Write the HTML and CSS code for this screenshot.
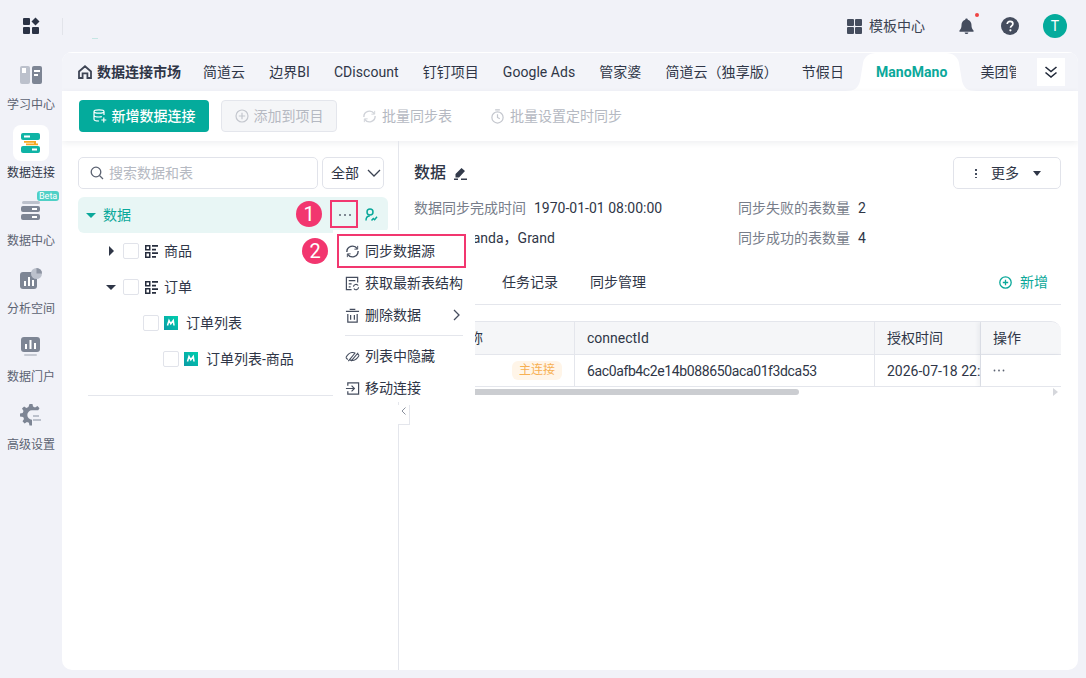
FILE: index.html
```html
<!DOCTYPE html>
<html lang="zh-CN">
<head>
    <meta charset="UTF-8">
    <title>数据连接</title>
    <link rel="stylesheet" href="styles.css">
</head>
<body>
    <svg class="svg-defs" width="0" height="0">
        <defs>
            <linearGradient id="mano-fill" x1="0" y1="1" x2="1" y2="0">
                <stop offset="0" stop-color="#0a9aa6"/>
                <stop offset="1" stop-color="#00d0ad"/>
            </linearGradient>
        </defs>
    </svg>

    <div class="logo-cell">
        <svg width="18" height="18" viewBox="0 0 18 18"><rect x="1" y="1" width="7" height="7" rx="1" fill="#2b3345"/><rect x="1" y="10" width="7" height="7" rx="1" fill="#2b3345"/><rect x="10" y="10" width="7" height="7" rx="1" fill="#2b3345"/><path d="M13.500 0.500l4 4-4 4-4-4z" fill="#2b3345"/></svg>
    </div>

    <header class="topbar">
        <span class="top-divider"></span>
        <span class="top-mark"></span>
        <div class="top-right">
            <svg class="tpl-icon" width="15" height="15" viewBox="0 0 15 15"><rect width="7" height="7" rx="1" fill="#454d5e"/><rect x="8" width="7" height="7" rx="1" fill="#454d5e"/><rect y="8" width="7" height="7" rx="1" fill="#454d5e"/><rect x="8" y="8" width="7" height="7" rx="1" fill="#454d5e"/></svg>
            <span class="tpl-text">模板中心</span>
            <span class="bell">
                <svg width="15" height="18" viewBox="0 0 16 18"><path d="M8 1c.8 0 1.300.5 1.400 1.200C11.900 3 13.300 5 13.300 7.700c0 3 .5 4.300 2.200 6V15H.5v-1.300c1.700-1.700 2.200-3 2.200-6C2.700 5 4.100 3 6.600 2.200 6.700 1.500 7.200 1 8 1zM6 15.800h4C9.800 17 9 17.600 8 17.600S6.200 17 6 15.800z" fill="#454d5e"/></svg>
                <i class="bell-dot"></i>
            </span>
            <svg class="help" width="18" height="18" viewBox="0 0 18 18"><circle cx="9" cy="9" r="9" fill="#454d5e"/><path d="M6.200 7c0-1.700 1.200-2.700 2.900-2.700 1.600 0 2.800.9 2.800 2.400 0 2.100-2.400 2.100-2.400 4" fill="none" stroke="#fff" stroke-width="1.700"/><circle cx="9.400" cy="13.300" r="1.100" fill="#fff"/></svg>
            <span class="avatar">T</span>
        </div>
    </header>

    <nav class="sidebar">
        <a class="side-item">
            <span class="side-icon">
                <svg width="22" height="20" viewBox="0 0 22 20"><rect x="0" y="1" width="10" height="18" rx="2" fill="#bcc1cc"/><rect x="12" y="1" width="10" height="18" rx="2" fill="#7d8594"/><rect x="2" y="3" width="4" height="5" fill="#fff"/><rect x="14" y="5" width="6" height="2" fill="#fff"/><rect x="14" y="9" width="4" height="2" fill="#fff"/></svg>
            </span>
            <span>学习中心</span>
        </a>
        <a class="side-item is-active">
            <span class="side-icon">
                <svg width="20" height="20" viewBox="0 0 20 20"><rect x="0" y="0" width="19" height="7" rx="2" fill="#0fb3a5"/><rect x="0" y="13" width="19" height="7" rx="2" fill="#0fb3a5"/><path d="M3 8h12v1.800H3z M5 10.500h12v1.800H5z M13 9h2v2.500h-2z" fill="#f7a823"/><rect x="3" y="2.500" width="6" height="2" fill="#fff"/><rect x="11" y="15.500" width="5" height="2" fill="#fff"/></svg>
            </span>
            <span>数据连接</span>
        </a>
        <a class="side-item">
            <span class="side-icon">
                <svg width="20" height="20" viewBox="0 0 20 20"><rect x="1" y="0" width="18" height="3" rx="1.500" fill="#bcc1cc"/><rect y="5" width="19" height="6" rx="2" fill="#7d8594"/><rect y="13" width="19" height="6" rx="2" fill="#7d8594"/><rect x="11" y="7" width="5" height="2" fill="#fff"/><rect x="11" y="15" width="5" height="2" fill="#fff"/></svg>
                <b class="beta">Beta</b>
            </span>
            <span>数据中心</span>
        </a>
        <a class="side-item">
            <span class="side-icon">
                <svg width="22" height="22" viewBox="0 0 22 22"><rect x="0" y="4" width="17" height="17" rx="3" fill="#7d8594"/><rect x="4" y="13" width="2" height="5" fill="#fff"/><rect x="8" y="9" width="2" height="9" fill="#fff"/><rect x="12" y="12" width="2" height="6" fill="#fff"/><circle cx="16.500" cy="5.500" r="5.500" fill="#bcc1cc"/><path d="M16.500 5.500V0a5.500 5.500 0 0 1 5.500 5.500z" fill="#8d94a2"/></svg>
            </span>
            <span>分析空间</span>
        </a>
        <a class="side-item">
            <span class="side-icon">
                <svg width="20" height="20" viewBox="0 0 20 20"><rect x="0" y="0" width="19" height="15" rx="3" fill="#7d8594"/><rect x="4" y="7" width="2" height="5" fill="#fff"/><rect x="8.500" y="3" width="2" height="9" fill="#fff"/><rect x="13" y="6" width="2" height="6" fill="#fff"/><rect x="3" y="17" width="13" height="2" rx="1" fill="#c6cad3"/></svg>
            </span>
            <span>数据门户</span>
        </a>
        <a class="side-item">
            <span class="side-icon">
                <svg width="22" height="22" viewBox="0 0 22 22"><path d="M9.500 0h3l.5 2.600 2 .8L17.500 2l2 2.300-1.300 2H12a4.700 4.700 0 1 0 0 9.400v5.800H9.500l-.6-2.700-2-.8-2.300 1.500-2.100-2.200 1.500-2.300-.8-2L0 12.500v-3l2.700-.6.800-2L2 4.600l2.100-2.200 2.300 1.500 2-.8z" fill="#7d8594"/><rect x="13" y="11" width="6" height="2" fill="#bcc1cc"/><rect x="13" y="15" width="8" height="2" fill="#bcc1cc"/></svg>
            </span>
            <span>高级设置</span>
        </a>
    </nav>

    <main class="panel">
        <div class="tabbar">
            <div class="tab-list">
                <span class="tab tab-home">
                    <svg width="14" height="14" viewBox="0 0 14 14"><path d="M1 6.500L7 1.300l6 5.200V13H9.400V8.300H4.600V13H1z" fill="none" stroke="#3e4555" stroke-width="1.800"/></svg>
                    数据连接市场
                </span>
                <span class="tab">简道云</span>
                <span class="tab">边界BI</span>
                <span class="tab">CDiscount</span>
                <span class="tab">钉钉项目</span>
                <span class="tab">Google Ads</span>
                <span class="tab">管家婆</span>
                <span class="tab">简道云（独享版）</span>
                <span class="tab">节假日</span>
                <span class="tab is-active">
                    <svg class="tab-shape" width="132" height="39" viewBox="0 0 132 39"><path d="M0 39c10 0 13-3 15-10l3-18C19 5 24 1 31 1h70c7 0 12 4 13 10l3 18c2 7 5 10 15 10z" fill="#fff"/></svg>
                    <span class="tab-label">ManoMano</span>
                </span>
                <span class="tab">美团管家</span>
            </div>
            <span class="tab-more">
                <svg width="14" height="12" viewBox="0 0 14 12"><path d="M1.500 1l5.500 4.500L12.500 1M1.500 6.500L7 11l5.500-4.500" fill="none" stroke="#222a3a" stroke-width="1.600"/></svg>
            </span>
        </div>

        <div class="toolbar">
            <button class="btn-primary">
                <svg width="14" height="14" viewBox="0 0 14 14"><g fill="none" stroke="#fff" stroke-width="1.200"><path d="M1 2.500C1 1.500 3.200.8 6 .8s5 .7 5 1.700-2.200 1.700-5 1.700-5-.7-5-1.700zM1 2.500c0 2 0 2.500 0 3.700 0 1 2.200 1.800 5 1.800 1 0 2-.1 2.800-.3M11 2.500V6M1 6.500c0 1.500 0 2.500 0 3.700 0 1 2.200 1.800 5 1.800M10.800 8.500v5M8.300 11h5"/></g></svg>
                新增数据连接
            </button>
            <button class="btn-disabled">
                <svg width="14" height="14" viewBox="0 0 14 14"><circle cx="7" cy="7" r="6" fill="none" stroke="#c4c7ce" stroke-width="1.200"/><path d="M7 3.800v6.400M3.800 7h6.400" stroke="#c4c7ce" stroke-width="1.200"/></svg>
                添加到项目
            </button>
            <span class="tool-link link-sync">
                <svg width="15" height="15" viewBox="0 0 16 16"><path d="M2 8.500A6 6 0 0 1 13 5M14 7.500A6 6 0 0 1 3 11" fill="none" stroke="#d0d3d9" stroke-width="1.500"/><path d="M13.500 2v3.500H10M2.500 14v-3.500H6" fill="none" stroke="#d0d3d9" stroke-width="1"/></svg>
                批量同步表
            </span>
            <span class="tool-link">
                <svg width="15" height="15" viewBox="0 0 16 16"><circle cx="8" cy="9" r="6" fill="none" stroke="#c4c7ce" stroke-width="1.300"/><path d="M8 5.500V9l2.500 1.500M5.500 1h5" fill="none" stroke="#c4c7ce" stroke-width="1.300"/></svg>
                批量设置定时同步
            </span>
        </div>

        <div class="content">
            <section class="left-pane">
                <div class="filter-row">
                    <label class="search">
                        <svg width="14" height="14" viewBox="0 0 14 14"><circle cx="6" cy="6" r="4.800" fill="none" stroke="#5c6372" stroke-width="1.300"/><path d="M9.500 9.500L13 13" stroke="#5c6372" stroke-width="1.300"/></svg>
                        <span>搜索数据和表</span>
                    </label>
                    <span class="select">全部
                        <svg width="14" height="8" viewBox="0 0 14 8"><path d="M1 1l6 6 6-6" fill="none" stroke="#3b4252" stroke-width="1.300"/></svg>
                    </span>
                </div>

                <div class="tree">
                    <div class="tree-row is-root">
                        <i class="caret-down teal"></i>
                        <span>数据</span>
                        <span class="row-tools">
                            <svg width="14" height="4" viewBox="0 0 14 4"><circle cx="2" cy="2" r="1" fill="#5c6372"/><circle cx="7" cy="2" r="1" fill="#5c6372"/><circle cx="12" cy="2" r="1" fill="#5c6372"/></svg>
                            <svg width="13" height="14" viewBox="0 0 13 14"><circle cx="5" cy="4" r="3" fill="none" stroke="#0aa89a" stroke-width="1.500"/><path d="M1 12.500c0-2.500 1.500-4.500 3.800-4.500M6.500 12.500l1.800-2 1.300 1.200 2.400-3" fill="none" stroke="#0aa89a" stroke-width="1.500"/></svg>
                        </span>
                    </div>
                    <div class="tree-row lvl-1">
                        <span class="caret-box"><i class="caret-right"></i></span><i class="check"></i>
                        <svg class="table-icon" width="13" height="13" viewBox="0 0 13 13"><g fill="#262d3d"><path d="M0 0h5.500v5.500H0zM1.500 1.500V4H4V1.500zM0 7h5.500v6H0zM1.500 8.500v3H4v-3zM7 0h6v1.800H7zM7 3.700h4v1.800H7zM7 7.300h6v1.800H7zM7 11h4v1.800H7z"/></g></svg>
                        <span>商品</span>
                    </div>
                    <div class="tree-row lvl-1">
                        <span class="caret-box"><i class="caret-down"></i></span><i class="check"></i>
                        <svg class="table-icon" width="13" height="13" viewBox="0 0 13 13"><g fill="#262d3d"><path d="M0 0h5.500v5.500H0zM1.500 1.500V4H4V1.500zM0 7h5.500v6H0zM1.500 8.500v3H4v-3zM7 0h6v1.800H7zM7 3.700h4v1.800H7zM7 7.300h6v1.800H7zM7 11h4v1.800H7z"/></g></svg>
                        <span>订单</span>
                    </div>
                    <div class="tree-row lvl-2">
                        <i class="check"></i>
                        <svg class="mano-icon" width="14" height="14" viewBox="0 0 14 14"><rect width="14" height="14" fill="url(#mano-fill)"/><path d="M3.500 9.500l1.500-5 1.800 3.300L9.300 4.500l.7 5" fill="none" stroke="#fff" stroke-width="1.500"/></svg>
                        <span>订单列表</span>
                    </div>
                    <div class="tree-row lvl-3">
                        <i class="check"></i>
                        <svg class="mano-icon" width="14" height="14" viewBox="0 0 14 14"><rect width="14" height="14" fill="url(#mano-fill)"/><path d="M3.500 9.500l1.500-5 1.800 3.300L9.300 4.500l.7 5" fill="none" stroke="#fff" stroke-width="1.500"/></svg>
                        <span>订单列表-商品</span>
                    </div>
                </div>
                <div class="tree-end"></div>
                <span class="collapse-handle">
                    <svg width="5" height="8" viewBox="0 0 5 8"><path d="M4.500.5L1 4l3.500 3.500" fill="none" stroke="#8a909c"/></svg>
                </span>
            </section>

            <section class="right-pane">
                <div class="detail-head">
                    <h2>数据</h2>
                    <svg width="14" height="13" viewBox="0 0 14 13"><path d="M8.500 1l3.500 3-6 6.500H2.500V7zM8 11.500h6V13H8zM1 11.500h4V13H1z" fill="#333b4b"/></svg>
                    <span class="more-btn">
                        <i class="v-dots"></i>
                        更多
                        <i class="caret-down dark"></i>
                    </span>
                </div>
                <div class="info">
                    <div class="info-cell"><span class="info-key">数据同步完成时间</span><span>1970-01-01 08:00:00</span></div>
                    <div class="info-cell"><span class="info-key">同步失败的表数量</span><span>2</span></div>
                    <div class="info-cell"><span class="info-key">创建者</span><span>Panda，Grand</span></div>
                    <div class="info-cell"><span class="info-key">同步成功的表数量</span><span>4</span></div>
                </div>
                <div class="detail-tabs">
                    <span class="d-tab">基本信息</span>
                    <span class="d-tab">任务记录</span>
                    <span class="d-tab">同步管理</span>
                    <span class="d-add">
                        <svg width="13" height="13" viewBox="0 0 13 13"><circle cx="6.500" cy="6.500" r="5.700" fill="none" stroke="#0aa89a" stroke-width="1.300"/><path d="M3.800 6.500h5.400M6.500 3.800v5.400" stroke="#0aa89a" stroke-width="1.300"/></svg>
                        新增
                    </span>
                </div>
                <div class="grid-wrap">
                    <div class="grid-table">
                        <div class="cell head">连接名称</div>
                        <div class="cell head">connectId</div>
                        <div class="cell head">授权时间</div>
                        <div class="cell head op">操作</div>
                        <div class="cell name">数据 <em class="badge">主连接</em></div>
                        <div class="cell hex">6ac0afb4c2e14b088650aca01f3dca53</div>
                        <div class="cell nowrap">2026-07-18 22:05:31</div>
                        <div class="cell op">
                            <svg width="12" height="3" viewBox="0 0 12 3"><circle cx="1.500" cy="1.500" r=".9" fill="#5c6372"/><circle cx="6" cy="1.500" r=".9" fill="#5c6372"/><circle cx="10.500" cy="1.500" r=".9" fill="#5c6372"/></svg>
                        </div>
                    </div>
                </div>
                <div class="hscroll"><i class="thumb"></i><i class="arrow"></i></div>
            </section>

            <ul class="menu">
                <li>
                    <svg width="15" height="15" viewBox="0 0 16 16"><path d="M2 8.500A6 6 0 0 1 13 5M14 7.500A6 6 0 0 1 3 11" fill="none" stroke="#454d5e" stroke-width="1.500"/><path d="M13.500 2v3.500H10M2.500 14v-3.500H6" fill="none" stroke="#454d5e" stroke-width="1"/></svg>
                    同步数据源
                </li>
                <li>
                    <svg width="15" height="15" viewBox="0 0 16 16"><path d="M7 14.500H1.500v-13h12V7M4 5h7M4 8.500h3M4 11.500h2" fill="none" stroke="#454d5e" stroke-width="1.300"/><path d="M9 11.500a2.700 2.700 0 0 1 5-1.300M14.500 12a2.700 2.700 0 0 1-5 1.300" fill="none" stroke="#454d5e" stroke-width="1.200"/></svg>
                    获取最新表结构
                </li>
                <li>
                    <svg width="15" height="15" viewBox="0 0 16 16"><path d="M1 3.500h14M5 1.500h6" fill="none" stroke="#454d5e" stroke-width="1.400"/><path d="M3 6.500v8.500h10V6.500M6 7.500v5M10 7.500v5" fill="none" stroke="#454d5e" stroke-width="1.300"/></svg>
                    删除数据
                    <svg class="menu-arrow" width="7" height="12" viewBox="0 0 7 12"><path d="M1 1l5 5-5 5" fill="none" stroke="#454d5e" stroke-width="1.300"/></svg>
                </li>
                <li class="menu-sep"></li>
                <li>
                    <svg width="15" height="15" viewBox="0 0 16 16"><path d="M1 9c1.500-2.600 3.500-5 6.500-5.200 1.300-.1 2.500.2 3.500.8M15 7c-1.500 2.600-3.500 5-6.500 5.200-1.300.1-2.500-.2-3.500-.8M1 9c.6 1 1.300 1.700 2 2.200M15 7c-.6-1-1.300-1.700-2-2.200M3.500 13L11 4M6.500 13L14 4" fill="none" stroke="#454d5e" stroke-width="1.200"/></svg>
                    列表中隐藏
                </li>
                <li>
                    <svg width="15" height="15" viewBox="0 0 16 16"><path d="M3 5V2h11.500v12H3v-3M1 8h8.500M7 5l3 3-3 3" fill="none" stroke="#454d5e" stroke-width="1.300"/></svg>
                    移动连接
                </li>
            </ul>

            <span class="mark-box box-dots"></span>
            <span class="mark-box box-sync"></span>
            <span class="mark-num num-1">1</span>
            <span class="mark-num num-2">2</span>
        </div>
    </main>
</body>
</html>
```

FILE: styles.css
```css
* {
    box-sizing: border-box;
}
html, body {
    height: 100%;
}
body {
    margin: 0;
    width: 1086px;
    height: 678px;
    overflow: hidden;
    display: grid;
    grid-template-columns: 62px 1fr;
    grid-template-rows: 52px 1fr;
    background: #f1f2f8;
    color: #2f3647;
    font: 14px/20px Roboto, "Noto Sans CJK SC", sans-serif;
}
i, em {
    font-style: normal;
}
.svg-defs {
    position: absolute;
}

/* top */
.logo-cell {
    display: flex;
    align-items: center;
    justify-content: center;
    padding-bottom: 1px;
}
.topbar {
    position: relative;
    display: flex;
    align-items: center;
    padding-right: 19px;
}
.top-divider {
    width: 1px;
    height: 17px;
    background: #e2e4ea;
}
.top-mark {
    position: absolute;
    left: 30px;
    top: 38px;
    width: 6px;
    height: 1px;
    background: #c5e6e4;
}
.top-right {
    margin-left: auto;
    display: flex;
    align-items: center;
}
.tpl-text {
    margin-left: 7px;
    color: #3b4252;
}
.bell {
    position: relative;
    display: flex;
    margin-left: 34px;
}
.bell-dot {
    position: absolute;
    right: -5px;
    top: -4px;
    width: 4px;
    height: 4px;
    border-radius: 50%;
    background: #ef4444;
}
.help {
    margin-left: 27px;
}
.avatar {
    margin-left: 24px;
    width: 24px;
    height: 24px;
    border-radius: 50%;
    background: #04ab9c;
    color: #fff;
    font-size: 14px;
    line-height: 24px;
    text-align: center;
}

/* sidebar */
.sidebar {
    display: flex;
    flex-direction: column;
    padding-top: 5px;
}
.side-item {
    height: 68px;
    display: flex;
    flex-direction: column;
    align-items: center;
    font-size: 12px;
    line-height: 16px;
    color: #5c6372;
}
.side-icon {
    position: relative;
    width: 36px;
    height: 36px;
    margin-bottom: 4px;
    display: flex;
    align-items: center;
    justify-content: center;
    border-radius: 8px;
}
.side-item.is-active {
    color: #2f3647;
}
.is-active .side-icon {
    background: #fff;
}
.beta {
    position: absolute;
    left: 24px;
    top: -2px;
    height: 10px;
    padding: 0 2px;
    border-radius: 3px;
    background: #4fd0c6;
    color: #fff;
    font-size: 9px;
    font-weight: 400;
    line-height: 10px;
}

/* panel */
.panel {
    margin: 0 8px 8px 0;
    background: #fff;
    border-radius: 10px;
    display: flex;
    flex-direction: column;
    overflow: hidden;
}
.tabbar {
    height: 39px;
    flex: none;
    display: flex;
    align-items: center;
    padding-left: 4px;
    background: #f3f4f9;
    border-top: 1px solid #fff;
}
.tab-list {
    width: 950px;
    height: 100%;
    display: flex;
    align-items: center;
    overflow: hidden;
    flex: none;
}
.tab {
    position: relative;
    flex: none;
    padding: 0 12px;
    white-space: nowrap;
    color: #2f3647;
    line-height: 38px;
    letter-spacing: 0.05px;
}
.tab-home {
    display: flex;
    align-items: center;
    gap: 5px;
    font-weight: 700;
    padding: 0 10px 0 12px;
    letter-spacing: 0;
}
.tab.is-active {
    margin: 0 9px 0 8px;
    color: #0aa89a;
    font-weight: 700;
}
.tab-shape {
    position: absolute;
    left: -19px;
    top: -1px;
}
.tab-label {
    position: relative;
}
.tab-more {
    flex: none;
    margin-left: 21px;
    width: 28px;
    height: 28px;
    display: flex;
    align-items: center;
    justify-content: center;
    background: #fff;
}

/* toolbar */
.toolbar {
    height: 50px;
    flex: none;
    display: flex;
    align-items: center;
    padding-left: 17px;
    background: #fff;
    box-shadow: 0 2px 6px rgba(40, 50, 80, 0.08);
    position: relative;
}
.toolbar button {
    height: 32px;
    display: flex;
    align-items: center;
    gap: 5px;
    border-radius: 4px;
    font: inherit;
}
.btn-primary {
    width: 130px;
    justify-content: center;
    border: 0;
    background: #04ab9c;
    color: #fff;
    font-weight: 500 !important;
}
.btn-disabled {
    width: 116px;
    justify-content: center;
    margin-left: 12px;
    border: 1px solid #e4e6ec;
    background: #f5f6f8;
    color: #b5b9c2;
}
.tool-link {
    display: flex;
    align-items: center;
    gap: 5px;
    color: #b5b9c2;
}
.link-sync {
    margin: 0 38px 0 25px;
}

/* left */
.content {
    position: relative;
    flex: 1;
    min-height: 0;
    display: flex;
}
.left-pane {
    width: 337px;
    flex: none;
    padding: 16px 10px 0 16px;
    border-right: 1px solid #e4e6ec;
}
.filter-row {
    display: flex;
    gap: 4px;
    margin-bottom: 8px;
}
.search {
    width: 240px;
    height: 32px;
    display: flex;
    align-items: center;
    gap: 5px;
    padding-left: 11px;
    border: 1px solid #e1e3ea;
    border-radius: 5px;
    color: #b5b9c2;
}
.select {
    width: 62px;
    height: 32px;
    display: flex;
    align-items: center;
    justify-content: space-between;
    padding: 0 2px 0 8px;
    border: 1px solid #e1e3ea;
    border-radius: 5px;
}
.tree-row {
    height: 36px;
    display: flex;
    align-items: center;
    width: 310px;
}
.tree-row.is-root {
    background: #e8f6f5;
    border-radius: 6px;
    padding-left: 8px;
    color: #0aa89a;
    gap: 7px;
}
.row-tools {
    margin-left: auto;
    display: flex;
    align-items: center;
    gap: 13px;
    padding-right: 10px;
}
.caret-box {
    width: 10px;
    display: flex;
    justify-content: center;
}
.caret-down {
    width: 0;
    height: 0;
    border: 5px solid transparent;
    border-top: 5px solid #2f3647;
    border-bottom: 0;
}
.caret-down.teal {
    border-top-color: #0aa89a;
}
.caret-right {
    width: 0;
    height: 0;
    border: 5px solid transparent;
    border-left: 5px solid #2f3647;
    border-right: 0;
}
.check {
    width: 16px;
    height: 16px;
    border: 1px solid #e1e3ea;
    border-radius: 2px;
    background: #fff;
    flex: none;
}
.lvl-1 {
    padding-left: 28px;
}
.lvl-1 .check {
    margin-left: 7px;
}
.table-icon {
    margin: 0 6px 0 6px;
}
.lvl-2 {
    padding-left: 65px;
}
.lvl-3 {
    padding-left: 85px;
}
.mano-icon {
    margin: 0 8px 0 5px;
}
.tree-end {
    margin: 18px 0 0 10px;
    width: 260px;
    border-top: 1px solid #e4e6ec;
}
.collapse-handle {
    position: absolute;
    left: 336px;
    top: 264px;
    width: 12px;
    height: 20px;
    display: flex;
    justify-content: center;
    padding-top: 2px;
    background: #fff;
    border: 1px solid #e4e6ec;
    border-width: 0 1px 1px 0;
}

/* right */
.right-pane {
    flex: 1;
    min-width: 0;
    padding: 16px 17px 0 15px;
}
.detail-head {
    display: flex;
    align-items: center;
    gap: 7px;
    height: 32px;
}
.detail-head h2 {
    margin: 0;
    font-size: 16px;
    font-weight: 500;
}
.more-btn {
    margin-left: auto;
    width: 108px;
    height: 32px;
    display: flex;
    align-items: center;
    padding-left: 21px;
    border: 1px solid #e1e3ea;
    border-radius: 5px;
}
.v-dots {
    width: 2px;
    height: 10px;
    margin-right: 14px;
    background: radial-gradient(circle, #454d5e 1px, transparent 1px) 0 0 / 2px 4px;
}
.more-btn .caret-down {
    margin-left: 14px;
    border-width: 4px;
    border-top-width: 5px;
    border-bottom-width: 0;
}
.info {
    display: grid;
    grid-template-columns: 324px 1fr;
    grid-auto-rows: 30px;
    margin-top: 4px;
}
.info-cell {
    display: flex;
    align-items: center;
    gap: 8px;
}
.info-key {
    color: #777d8a;
}
.detail-tabs {
    display: flex;
    align-items: center;
    height: 44px;
    margin-top: 8px;
    border-bottom: 1px solid #e4e6ec;
    padding-bottom: 1px;
}
.d-tab {
    margin-right: 32px;
}
.d-add {
    margin-left: auto;
    margin-right: 13px;
    display: flex;
    align-items: center;
    gap: 8px;
    color: #0aa89a;
}
.grid-wrap {
    margin-top: 16px;
    border: 1px solid #e4e6ec;
    border-width: 1px 0 0 1px;
    border-top-right-radius: 10px;
    overflow: hidden;
}
.grid-table {
    display: grid;
    grid-template-columns: 160px 300px 106px 81px;
    grid-template-rows: 33px 32px;
}
.cell {
    display: flex;
    align-items: center;
    padding-left: 12px;
    border-right: 1px solid #e4e6ec;
    border-bottom: 1px solid #e4e6ec;
    overflow: hidden;
    white-space: nowrap;
    background: #fff;
}
.cell.head {
    background: #f5f6f8;
}
.cell.hex {
    letter-spacing: -0.38px;
}
.cell.op {
    box-shadow: -3px 0 4px rgba(40, 50, 80, 0.06);
    position: relative;
}
.cell.name {
    justify-content: space-between;
    padding-right: 12px;
}
.badge {
    width: 50px;
    height: 19px;
    border-radius: 6px;
    background: #fff5e8;
    color: #f7b053;
    font-size: 12px;
    line-height: 19px;
    text-align: center;
}
.hscroll {
    position: relative;
    height: 8px;
    margin-top: 1px;
}
.thumb {
    position: absolute;
    left: 0;
    top: 1px;
    width: 385px;
    height: 6px;
    border-radius: 3px;
    background: #cbcdd1;
}
.arrow {
    position: absolute;
    right: 3px;
    top: 0;
    border: 4px solid transparent;
    border-left: 5px solid #d5d7dc;
    border-right: 0;
}

/* menu + callouts */
.menu {
    position: absolute;
    left: 271px;
    top: 89px;
    width: 142px;
    height: 172px;
    margin: 0;
    padding: 5px 0 0;
    list-style: none;
    background: #fff;
}
.menu li {
    height: 32px;
    display: flex;
    align-items: center;
    gap: 5px;
    padding-left: 12px;
}
.menu li.menu-sep {
    height: 1px;
    margin: 4px 12px 4px 12px;
    padding: 0;
    background: #e4e6ec;
}
.menu-arrow {
    margin-left: auto;
    margin-right: 15px;
}
.mark-box {
    position: absolute;
    border: 2px solid #f2366f;
}
.box-dots {
    left: 268px;
    top: 59px;
    width: 28px;
    height: 28px;
}
.box-sync {
    left: 275px;
    top: 93px;
    width: 129px;
    height: 34px;
}
.mark-num {
    position: absolute;
    width: 26px;
    height: 26px;
    border-radius: 50%;
    background: #f2366f;
    color: #fff;
    font-size: 20px;
    line-height: 26px;
    text-align: center;
}
.num-1 {
    left: 234px;
    top: 60px;
}
.num-2 {
    left: 240px;
    top: 97px;
}
```
